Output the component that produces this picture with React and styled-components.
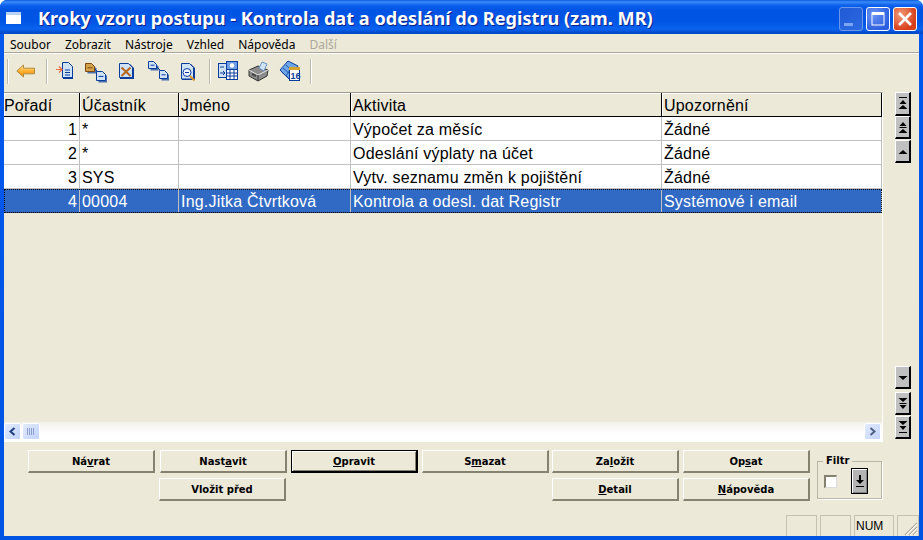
import React from "react";
import styled, { createGlobalStyle } from "styled-components";

const Global = createGlobalStyle`
  html, body { margin: 0; padding: 0; background: #fff; overflow: hidden; }
  * { box-sizing: border-box; }
`;

const Win = styled.div`
  width: 923px; height: 540px; display: flex; flex-direction: column;
  background: linear-gradient(180deg,#0058ee 0,#0054e3 100%);
  border-radius: 7px 7px 0 0; overflow: hidden;
  font-family: "Liberation Sans", Arial, sans-serif; color: #000;
`;
const TitleBar = styled.div`
  height: 34px; flex: none; display: flex; align-items: center; padding: 0 6px 0 6px;
  background: linear-gradient(180deg,#0a5ae0 0,#3a8cf6 2px,#0f62ee 5px,#0054e3 10px,#0055e5 22px,#0a63ef 29px,#0049c8 33px);
`;
const TitleIcon = styled.div`
  width: 15px; height: 12px; background: #fff; border-top: 3px solid #b9d3f5; margin-right: 17px; margin-top: 1px;
`;
const TitleText = styled.div`
  flex: 1; color: #fff; font: 700 18.15px "Noto Sans", sans-serif; white-space: nowrap;
  text-shadow: 1px 1px 0 #0f1f88; margin-top: 2px;
`;
const CapBtn = styled.div`
  width: 24px; height: 24px; margin-left: 3px; border: 1px solid #fff; border-radius: 3px; display: flex;
  position: relative; margin-top: 4px;
  background: ${p => p.$v === "close" ? "radial-gradient(circle at 30% 30%,#f09a78,#d8401c 70%)" : "radial-gradient(circle at 30% 30%,#6a92f2,#2a5fe0 75%)"};
  opacity: ${p => p.$v === "min" ? 0.72 : 1};
  ${p => p.$v === "min" ? "background: linear-gradient(135deg,#2e5ed0,#3b6fe0); border-color:#8fb0ee;" : ""}
`;
const Body = styled.div`
  flex: 1; margin: 0 4px 4px; background: #ece9d8; display: flex; flex-direction: column; min-height: 0;
`;
const MenuBar = styled.div`
  height: 19px; display: flex; gap: 14px; padding: 2px 0 0 6px; flex: none;
  font: 12px "Noto Sans", sans-serif; border-bottom: 1px solid #aca899; box-shadow: 0 1px 0 #fff;
`;
const MenuItem = styled.span` color: ${p => p.$off ? "#aca899" : "#000"}; `;
const Toolbar = styled.div`
  height: 38px; display: flex; align-items: center; flex: none; padding: 0 0 4px 1px; margin-top: 1px;
`;
const Sep = styled.div`
  width: 2px; height: 25px; background: #bdbaa9; border-right: 1px solid #fff; margin: 0 ${p => p.$r ?? 0}px 0 ${p => p.$l ?? 0}px; flex: none;
`;
const Tool = styled.div`
  width: 31px; height: 26px; display: flex; align-items: center; justify-content: center; flex: none;
`;
const Main = styled.div`
  height: 350px; display: flex; flex: none;
`;
const GridBox = styled.div`
  width: 879px; height: 350px; display: flex; flex-direction: column; flex: none;
  border-top: 1px solid #9d9a8c; border-right: 1px solid #fff; border-bottom: 1px solid #fff; position: relative;
`;
const Rows = styled.div` flex: 1; min-height: 0; `;
const Row = styled.div`
  display: grid; grid-template-columns: 76px 99px 172px 311px 220px; height: 24px;
  font-size: 16px; line-height: 25px; white-space: nowrap;
  background: ${p => p.$sel ? "#316ac5" : p.$head ? "#ece9d8" : "#fff"};
  color: ${p => p.$sel ? "#fff" : "#000"};
  border-bottom: 1px solid ${p => p.$head ? "#000" : p.$sel ? "#1c3f78" : "#c0c0c0"};
  ${p => p.$sel ? "outline: 1px dotted #111; outline-offset: -1px;" : ""}
`;
const Cell = styled.div`
  padding: ${p => p.$right ? "0 2px 0 0" : p.$flush ? "0" : "0 0 0 2px"}; overflow: hidden; text-align: ${p => p.$right ? "right" : "left"};
  border-right: 1px solid ${p => p.$head ? "#000" : "#c0c0c0"};
  ${p => p.$head ? "box-shadow: inset 1px 1px 0 #fff;" : ""}
  letter-spacing: 0.2px;
`;
const HScroll = styled.div`
  height: 19px; flex: none; display: flex; align-items: center; gap: 1px; padding-right: 1px;
  background: linear-gradient(180deg,#f3f1ec,#fefefe 60%,#fff);
`;
const ScrollBtn = styled.div`
  width: ${p => p.$w ?? 17}px; height: 17px; flex: none; border: 1px solid #fff; border-radius: 2px;
  background: linear-gradient(135deg,#e1eafe,#c3d3fd); display: flex; align-items: center; justify-content: center;
`;
const Track = styled.div` flex: 1; `;
const Side = styled.div`
  flex: 1; display: flex; flex-direction: column; padding: 0 0 3px 12px;
`;
const StepBtn = styled.div`
  width: 16px; height: ${p => p.$h ?? 23}px; background: #c0c0c0; flex: none; margin-top: ${p => p.$t ?? 0}px;
  border-top: 1px solid #fff; border-left: 1px solid #fff; border-right: 2px solid #000; border-bottom: 2px solid #000;
  display: flex; align-items: center; justify-content: center;
`;
const Spacer = styled.div` flex: 1; `;
const Bottom = styled.div`
  flex: 1; min-height: 0; display: flex; padding: 8px 0 0 24px; position: relative;
`;
const Buttons = styled.div`
  display: grid; grid-template-columns: repeat(6,127px); column-gap: 4px; row-gap: 5px; grid-auto-rows: 23px; width: 782px; flex: none;
`;
const Btn = styled.div`
  grid-column: ${p => p.$col}; margin-left: ${p => p.$dx ?? 0}px;
  width: 127px; height: 23px; display: flex; align-items: center; justify-content: center;
  font: 700 10px "DejaVu Sans", sans-serif; white-space: nowrap;
  background: #ece9d8;
  border-top: 1px solid #fff; border-left: 1px solid #fff; border-right: 2px solid #85826f; border-bottom: 2px solid #85826f;
  ${p => p.$def ? "border: 2px solid #000; border-top-width:1px; border-left-width:1px; box-shadow: inset 1px 1px 0 #fff, inset -1px -1px 0 #85826f;" : ""}
  u { text-underline-offset: 1px; }
`;
const Filter = styled.fieldset`
  margin: 5px 0 0 7px; padding: 0; width: 65px; height: 44px; flex: none;
  border: 1px solid #b9b6a5; box-shadow: 1px 1px 0 #fff; display: flex; align-items: center; align-self: flex-start;
`;
const Legend = styled.legend`
  font: 700 10px "DejaVu Sans", sans-serif; padding: 0 3px; margin-left: 5px; line-height: 12px;
`;
const FilterInner = styled.div` display: flex; align-items: center; padding: 0 0 3px 6px; gap: 14px; `;
const Check = styled.div`
  width: 13px; height: 13px; background: #fff; border-top: 2px solid #85826f; border-left: 2px solid #85826f;
  border-right: 1px solid #ddd; border-bottom: 1px solid #ddd;
`;
const FilterBtn = styled.div`
  width: 17px; height: 26px; background: #b4b4b4; border: 1px solid #000; box-shadow: inset 1px 1px 0 #fff, inset -1px -1px 0 #808080;
  display: flex; align-items: center; justify-content: center;
`;
const Status = styled.div`
  position: absolute; right: 0; bottom: 0; display: flex; gap: 3px; align-items: flex-end; height: 21px;
`;
const Pane = styled.div`
  width: ${p => p.$w}px; height: 21px; border: 1px solid #c5c2b0; border-bottom: 0; font: 12px "Liberation Sans", sans-serif;
  line-height: 20px; padding-left: 1px; position: relative; overflow: hidden;
`;

const Grip = () => (
  <svg width="15" height="15" viewBox="0 0 15 15" style={{ position: "absolute", right: 0, bottom: 0 }}>
    <path d="M14 2L2 14M14 6L6 14M14 10L10 14" stroke="#aca899" strokeWidth="1.2" />
    <path d="M14 3L3 14M14 7L7 14M14 11L11 14" stroke="#fff" strokeWidth="1" />
  </svg>
);

const Doc = ({ x, y, w = 9, h = 9, fill = "#cfe2f8", stroke = "#0a3c9c" }) => (
  <g>
    <path d={`M${x + 1} ${y + 1}h${w - 3}l3 3v${h - 3}h-${w}z`} fill="#0a3c9c" opacity=".7" transform="translate(1.5 1.5)" />
    <path d={`M${x + .5} ${y + .5}h${w - 3}l3 3v${h - 3}h-${w}z`} fill={fill} stroke={stroke} />
    <path d={`M${x + 2.5} ${y + h * .6}h${w - 4}`} stroke={stroke} />
  </g>
);

const Icons = {
  back: (
    <svg width="20" height="14" viewBox="0 0 20 14">
      <defs><linearGradient id="ag" x1="0" y1="0" x2="0" y2="1"><stop offset="0" stopColor="#fff0b0" /><stop offset=".5" stopColor="#ffb030" /><stop offset="1" stopColor="#e88a10" /></linearGradient></defs>
      <path d="M7.5 1L.8 7l6.7 6V9.8h11V4.2H7.5z" fill="url(#ag)" stroke="#b08a3a" />
    </svg>
  ),
  insert: (
    <svg width="24" height="24" viewBox="0 0 24 24">
      <path d="M11 5h6l4 4v11H11z" fill="#0a3c9c" />
      <path d="M10.500 3.500h6l4 4v11h-10z" fill="#cfe2f8" stroke="#0a3c9c" />
      <path d="M13 11h5M13 13.500h5M13 16h5" stroke="#0a3c9c" />
      <path d="M4 10.500h6M7 7.500l3 3-3 3" stroke="#e86a40" strokeWidth="1.2" fill="none" />
    </svg>
  ),
  copyOrange: (
    <svg width="24" height="24" viewBox="0 0 24 24">
      <Doc x={2} y={4} h={8} fill="#d4a24a" stroke="#7a4a10" />
      <path d="M12 10l3 3" stroke="#0a3c9c" />
      <Doc x={13} y={12} />
    </svg>
  ),
  del: (
    <svg width="24" height="24" viewBox="0 0 24 24">
      <path d="M6 5h10l4 4v11H6z" fill="#0a3c9c" />
      <path d="M5.500 4.500h9l4 4v10h-13z" fill="#cfe2f8" stroke="#0a3c9c" />
      <path d="M7.500 8.500l9 8.500M16.500 8.500l-9 8.500" stroke="#b8651c" strokeWidth="2" />
    </svg>
  ),
  copyBlue: (
    <svg width="24" height="24" viewBox="0 0 24 24">
      <Doc x={3} y={2} w={8} h={7} />
      <path d="M12 8l3 3" stroke="#0a3c9c" />
      <Doc x={14} y={11} w={8} h={8} />
    </svg>
  ),
  view: (
    <svg width="24" height="24" viewBox="0 0 24 24">
      <path d="M6 5h9l4 4v12H6z" fill="#0a3c9c" />
      <path d="M5.500 4.500h8l4 4v11.500h-12z" fill="#cfe2f8" stroke="#0a3c9c" />
      <circle cx="11" cy="13.500" r="4" fill="#eef6ff" stroke="#0a3c9c" />
      <path d="M9 13.500h4" stroke="#0a3c9c" />
      <path d="M14 17l4.500 4.500" stroke="#e0962a" strokeWidth="2" />
    </svg>
  ),
  table: (
    <svg width="24" height="24" viewBox="0 0 24 24">
      <rect x="2.500" y="4.500" width="9" height="14" fill="#cfe2f8" stroke="#0a3c9c" />
      <path d="M4 8h4M4 14h5M7 12l2 2-2 2" stroke="#0a3c9c" fill="none" />
      <rect x="10.500" y="2.500" width="11" height="8" fill="#6e9ee8" stroke="#0a3c9c" />
      <circle cx="16" cy="6.500" r="2.200" fill="#fff" />
      <rect x="10.500" y="10.500" width="11" height="10" fill="#fff" stroke="#0a3c9c" />
      <path d="M10.500 14h11M10.500 17h11M14 10.500v10M18 10.500v10" stroke="#0a3c9c" />
    </svg>
  ),
  print: (
    <svg width="24" height="24" viewBox="0 0 24 24">
      <path d="M2 11l9-4 10 4-1 6-9 5-9-5z" fill="#8c8c8c" stroke="#333" />
      <path d="M2 11l9 5 10-5" fill="none" stroke="#e0e0e0" />
      <path d="M11 16v6" stroke="#333" />
      <path d="M12 9l3-6 5 2-3 7z" fill="#cfe2f8" stroke="#6a93c8" />
      <path d="M5 15l4 2" stroke="#444" strokeWidth="2" />
    </svg>
  ),
  cal: (
    <svg width="24" height="24" viewBox="0 0 24 24">
      <path d="M2 11l8-9 10 5-8 14z" fill="#6ea6e8" stroke="#0a3c9c" />
      <path d="M5 9l8 7M8 6l7 7M3.500 13l7 6M8 17l5-8" stroke="#0a3c9c" strokeWidth=".7" />
      <rect x="11.500" y="9.500" width="10" height="12" fill="#fff" stroke="#0a3c9c" />
      <rect x="11" y="8" width="11" height="3" fill="#d8a52c" />
      <text x="12.500" y="20" fontSize="9" fontWeight="700" fontFamily="Liberation Sans" fill="#0a3c9c">16</text>
    </svg>
  ),
};

const Tri = ({ dir, y = 0, w = 7 }) => {
  const h = 4;
  const d = dir === "up" ? `M${-w / 2} ${y + h}L0 ${y}L${w / 2} ${y + h}z` : `M${-w / 2} ${y}L0 ${y + h}L${w / 2} ${y}z`;
  return <path d={d} fill="#000" />;
};
const Step = ({ kind, dir }) => {
  const up = dir === "up";
  const parts = {
    one: up ? [<Tri key="a" dir="up" y={5} w={9} />] : [<Tri key="a" dir="down" y={5} w={9} />],
    two: up ? [<Tri key="a" dir="up" y={1} />, <rect key="l" x="-3.500" y="6" width="7" height="1" />, <Tri key="b" dir="up" y={8} w={9} />]
      : [<Tri key="a" dir="down" y={1} w={9} />, <rect key="l" x="-3.500" y="6" width="7" height="1" />, <Tri key="b" dir="down" y={8} />],
    top: up ? [<rect key="t" x="-4" y="0" width="8" height="1" />, <Tri key="a" dir="up" y={3} />, <Tri key="b" dir="up" y={8} w={9} />]
      : [<Tri key="a" dir="down" y={0} w={9} />, <Tri key="b" dir="down" y={5} />, <rect key="t" x="-4" y="11" width="8" height="1" />],
  };
  return (
    <svg width="12" height="15" viewBox="-6 -1 12 15">{parts[kind]}</svg>
  );
};

const Chev = ({ right, color }) => (
  <svg width="9" height="9" viewBox="0 0 9 9">
    <path d={right ? "M2.500 1l4 3.500-4 3.500" : "M6.500 1l-4 3.500 4 3.500"} fill="none" stroke={color} strokeWidth="2" />
  </svg>
);

const data = [
  ["1", "*", "", "Výpočet za měsíc", "Žádné"],
  ["2", "*", "", "Odeslání výplaty na účet", "Žádné"],
  ["3", "SYS", "", "Vytv. seznamu změn k pojištění", "Žádné"],
  ["4", "00004", "Ing.Jitka Čtvrtková", "Kontrola a odesl. dat Registr", "Systémové i email"],
];
const heads = ["Pořadí", "Účastník", "Jméno", "Aktivita", "Upozornění"];
const menus = ["Soubor", "Zobrazit", "Nástroje", "Vzhled", "Nápověda"];

export default function App() {
  return (
    <Win>
      <Global />
      <TitleBar>
        <TitleIcon />
        <TitleText>Kroky vzoru postupu - Kontrola dat a odeslání do Registru (zam. MR)</TitleText>
        <CapBtn $v="min">
          <svg width="22" height="22" viewBox="0 0 22 22"><rect x="4" y="15" width="9" height="3" fill="#a9c0f5" /></svg>
        </CapBtn>
        <CapBtn>
          <svg width="22" height="22" viewBox="0 0 22 22"><rect x="5" y="5" width="12" height="12" fill="none" stroke="#fff" strokeWidth="1" /><rect x="5" y="4" width="12" height="3" fill="#fff" /></svg>
        </CapBtn>
        <CapBtn $v="close">
          <svg width="22" height="22" viewBox="0 0 22 22"><path d="M5 5l12 12M17 5L5 17" stroke="#fff" strokeWidth="2.600" /></svg>
        </CapBtn>
      </TitleBar>
      <Body>
        <MenuBar>
          {menus.map(m => <MenuItem key={m}>{m}</MenuItem>)}
          <MenuItem $off>Další</MenuItem>
        </MenuBar>
        <Toolbar>
          <Sep $l={2} $r={1} />
          <Tool>{Icons.back}</Tool>
          <Sep $l={5} />
          <Tool>{Icons.insert}</Tool>
          <Tool>{Icons.copyOrange}</Tool>
          <Tool>{Icons.del}</Tool>
          <Tool>{Icons.copyBlue}</Tool>
          <Tool>{Icons.view}</Tool>
          <Sep $l={6} $r={1} />
          <Tool>{Icons.table}</Tool>
          <Tool>{Icons.print}</Tool>
          <Tool>{Icons.cal}</Tool>
          <Sep $l={5} />
        </Toolbar>
        <Main>
          <GridBox>
            <Row $head>
              {heads.map((h, i) => <Cell key={h} $head $flush={i === 0}>{h}</Cell>)}
            </Row>
            <Rows>
              {data.map((r, i) => (
                <Row key={i} $sel={i === 3}>
                  {r.map((c, j) => <Cell key={j} $right={j === 0}>{c}</Cell>)}
                </Row>
              ))}
            </Rows>
            <HScroll>
              <ScrollBtn><Chev color="#1f3f80" /></ScrollBtn>
              <ScrollBtn $w={18}>
                <svg width="8" height="7" viewBox="0 0 8 7"><path d="M.5 0v7M2.500 0v7M4.500 0v7M6.500 0v7" stroke="#8a9fd0" /></svg>
              </ScrollBtn>
              <Track />
              <ScrollBtn><Chev right color="#4d6185" /></ScrollBtn>
            </HScroll>
          </GridBox>
          <Side>
            <StepBtn $h={24}><Step kind="top" dir="up" /></StepBtn>
            <StepBtn><Step kind="two" dir="up" /></StepBtn>
            <StepBtn $t={1}><Step kind="one" dir="up" /></StepBtn>
            <Spacer />
            <StepBtn><Step kind="one" dir="down" /></StepBtn>
            <StepBtn $t={3}><Step kind="two" dir="down" /></StepBtn>
            <StepBtn $t={1}><Step kind="top" dir="down" /></StepBtn>
          </Side>
        </Main>
        <Bottom>
          <Buttons>
            <Btn $col={1}>Ná<u>v</u>rat</Btn>
            <Btn $col={2} $dx={1}>Nast<u>a</u>vit</Btn>
            <Btn $col={3} $dx={1} $def><u>O</u>pravit</Btn>
            <Btn $col={4} $dx={1}>S<u>m</u>azat</Btn>
            <Btn $col={5}>Za<u>l</u>ožit</Btn>
            <Btn $col={6}>Op<u>s</u>at</Btn>
            <Btn $col={2}>Vložit před</Btn>
            <Btn $col={5}><u>D</u>etail</Btn>
            <Btn $col={6}><u>N</u>ápověda</Btn>
          </Buttons>
          <Filter>
            <Legend>Filtr</Legend>
            <FilterInner>
              <Check />
              <FilterBtn>
                <svg width="10" height="14" viewBox="0 0 10 14"><path d="M4 1h2v5h3L5 10 1 6h3z" fill="#000" /><rect x="1" y="12" width="8" height="1" fill="#000" /></svg>
              </FilterBtn>
            </FilterInner>
          </Filter>
          <Status>
            <Pane $w={31} />
            <Pane $w={31} />
            <Pane $w={40}>NUM</Pane>
            <Pane $w={22}><Grip /></Pane>
          </Status>
        </Bottom>
      </Body>
    </Win>
  );
}
